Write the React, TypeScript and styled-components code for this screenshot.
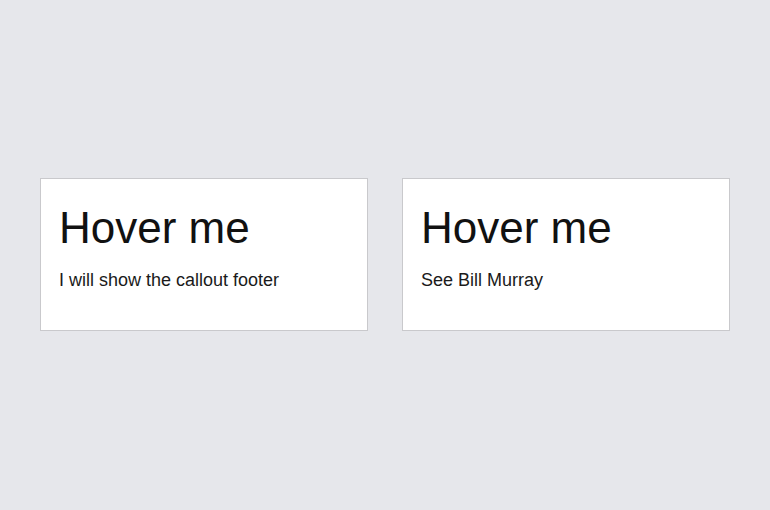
import React from "react";
import styled, { createGlobalStyle } from "styled-components";

const Global = createGlobalStyle`
  html, body { margin: 0; padding: 0; }
  body {
    background: #e6e7eb;
    font-family: "Liberation Sans", Arial, sans-serif;
    color: #111;
  }
`;

const Page = styled.div`
  height: 508px;
  box-sizing: border-box;
  padding: 0 40px;
  display: flex;
  align-items: center;
  gap: 34px;
`;

const Card = styled.div`
  flex: 1;
  height: 153px;
  box-sizing: border-box;
  background: #fff;
  border: 1px solid #c9c9cc;
  padding: 24px 18px 16px;
`;

const Title = styled.h2`
  margin: 0;
  font-size: 44px;
  font-weight: 400;
  line-height: normal;
  color: #111;
`;

const Text = styled.p`
  margin: 17px 0 0;
  font-size: 18px;
  line-height: normal;
  color: #1a1a1a;
`;

export default function App() {
  return (
    <>
      <Global />
      <Page>
        <Card>
          <Title>Hover me</Title>
          <Text>I will show the callout footer</Text>
        </Card>
        <Card>
          <Title>Hover me</Title>
          <Text>See Bill Murray</Text>
        </Card>
      </Page>
    </>
  );
}
